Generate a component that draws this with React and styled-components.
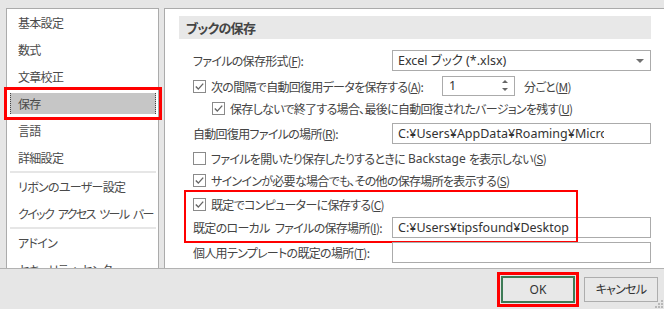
import React from 'react'
import styled, { createGlobalStyle } from 'styled-components'

const GlobalStyle = createGlobalStyle`
  html, body { margin: 0; padding: 0; background: #e6e6e6; }
  body {
    font-family: "Noto Sans CJK JP", sans-serif;
    font-size: 12px;
    color: #444;
    font-feature-settings: "palt";
    letter-spacing: -0.7px;
  }
`

const Window = styled.div`
  width: 664px;
  height: 309px;
  display: flex;
  flex-direction: column;
  overflow: hidden;
`

const Main = styled.div`
  display: flex;
  gap: 5px;
  height: 268px;
  flex: none;
  padding: 8px 0 0 6px;
  box-sizing: border-box;
  overflow: hidden;
`

const Nav = styled.div`
  width: 153px;
  flex: none;
  display: flex;
  flex-direction: column;
  background: #fff;
  border: 1px solid #ababab;
  border-bottom: none;
  box-sizing: border-box;
`

const NavItem = styled.div`
  flex: none;
  height: 21px;
  line-height: 21px;
  margin: 3px 2px 3px 3px;
  padding-left: 7px;
  white-space: nowrap;
  color: #4a4a4a;
  letter-spacing: ${p => (p.$tight ? '-1.6px' : '-0.7px')};
  border-left: 1px dotted ${p => (p.$active ? '#444' : 'transparent')};
  border-right: 1px dotted ${p => (p.$active ? '#444' : 'transparent')};
  background: ${p => (p.$active ? '#c6c6c6' : 'transparent')};
  outline: ${p => (p.$marked ? '3px solid #f00' : 'none')};
  outline-offset: 3px;
`

const NavDivider = styled.div`
  flex: none;
  height: 2px;
  margin: 0 2px 0 3px;
  background: #e6e6e6;
`

const Panel = styled.div`
  flex: 1;
  min-width: 0;
  background: #fff;
  border-left: 1px solid #ababab;
  border-top: 1px solid #ababab;
  padding: 7px 0 0 14px;
`

const SectionTitle = styled.div`
  width: 472px;
  height: 23px;
  line-height: 23px;
  padding-left: 7px;
  box-sizing: border-box;
  background: #e8e8e8;
  font-size: 13px;
  font-weight: bold;
  color: #444;
`

const Form = styled.div`
  width: 472px;
  padding-left: 14px;
  box-sizing: border-box;
`

const Row = styled.div`
  display: flex;
  align-items: center;
  height: ${p => p.$h || 21}px;
  margin-top: ${p => p.$mt || 0}px;
  padding-left: ${p => p.$indent || 0}px;
  white-space: nowrap;
`

const Label = styled.div`
  width: ${p => p.$w || 199}px;
  flex: none;
  display: flex;
  align-items: center;
  white-space: pre;
`

const Field = styled.div`
  position: relative;
  width: 259px;
  height: 21px;
  line-height: 19px;
  border: 1px solid #ababab;
  box-sizing: border-box;
  padding-left: 5px;
  overflow: hidden;
  white-space: nowrap;
  color: #333;
  letter-spacing: normal;
  font-family: "Segoe UI", "Noto Sans", "Noto Sans CJK JP", sans-serif;
  font-size: 12.5px;
`

const Clip = styled.span`
  display: inline-block;
  max-width: ${p => p.$w}px;
  overflow: hidden;
  vertical-align: top;
`

const Arrow = styled.span`
  position: absolute;
  right: 6px;
  top: 8px;
  width: 0;
  height: 0;
  border-left: 4px solid transparent;
  border-right: 4px solid transparent;
  border-top: 4px solid #707070;
`

const Spinner = styled.div`
  position: relative;
  width: 73px;
  height: 20px;
  line-height: 18px;
  border: 1px solid #ababab;
  box-sizing: border-box;
  padding-left: 6px;
  color: #333;
  letter-spacing: normal;
  font-family: "Segoe UI", "Noto Sans", sans-serif;
  font-size: 12.5px;
`

const SpinArrows = styled.div`
  position: absolute;
  right: 6px;
  top: 3px;
  display: flex;
  flex-direction: column;
  gap: 5px;
`

const Tri = styled.span`
  width: 0;
  height: 0;
  border-left: 3px solid transparent;
  border-right: 3px solid transparent;
  ${p => (p.$up ? 'border-bottom: 3px solid #666;' : 'border-top: 3px solid #666;')}
`

const Unit = styled.span`
  margin-left: 9px;
`

const Latin = styled.span`
  font-family: "Segoe UI", "Noto Sans", sans-serif;
  letter-spacing: normal;
`

const Box = styled.span`
  width: 13px;
  height: 13px;
  flex: none;
  margin-right: 5px;
  border: 1px solid #8a8a8a;
  box-sizing: border-box;
  display: inline-flex;
  align-items: center;
  justify-content: center;
  background: #fff;
`

const Group = styled.div`
  position: relative;
  margin-top: 3px;
`

const Highlight = styled.div`
  position: absolute;
  left: -9px;
  top: -4px;
  width: 394px;
  height: 53px;
  border: 2px solid #f00;
  box-sizing: border-box;
  pointer-events: none;
`

const Footer = styled.div`
  position: relative;
  height: 41px;
  flex: none;
  box-sizing: border-box;
  border-top: 1px solid #b2b2b2;
  display: flex;
  justify-content: flex-end;
  align-items: center;
  gap: 9px;
  padding-right: 6px;
`

const Button = styled.button`
  width: 74px;
  height: ${p => (p.$primary ? 27 : 25)}px;
  box-sizing: border-box;
  border: ${p => (p.$primary ? '2px solid #3d7b56' : '1px solid #adadad')};
  background: #e8e8e8;
  color: #333;
  font-family: "Segoe UI", "Noto Sans", "Noto Sans CJK JP", sans-serif;
  font-size: 12px;
  font-feature-settings: "palt";
  letter-spacing: ${p => (p.$primary ? 'normal' : '-0.7px')};
  padding: 0;
  outline: ${p => (p.$marked ? '3px solid #f00' : 'none')};
  outline-offset: 1px;
`

const Grip = styled.svg`
  position: absolute;
  right: 1px;
  bottom: 1px;
`

const Check = ({ checked }) => (
  <Box>
    {checked && (
      <svg width="11" height="11" viewBox="0 0 11 11">
        <path d="M1.8 5.6 L4.3 8.1 L9.2 2.6" fill="none" stroke="#666" strokeWidth="1.4" />
      </svg>
    )}
  </Box>
)

const navTop = ['基本設定', '数式', '文章校正', '保存', '言語', '詳細設定']

const App = () => {
  return (
    <Window>
      <GlobalStyle />
      <Main>
        <Nav>
          {navTop.map(t => (
            <NavItem key={t} $active={t === '保存'} $marked={t === '保存'}>{t}</NavItem>
          ))}
          <NavDivider />
          <NavItem>リボンのユーザー設定</NavItem>
          <NavItem $tight>クイック{'\u2002'}アクセス{'\u2002'}ツール{'\u2002'}バー</NavItem>
          <NavDivider />
          <NavItem>アドイン</NavItem>
          <NavItem>セキュリティ{'\u2002'}センター</NavItem>
        </Nav>
        <Panel>
          <SectionTitle>ブックの保存</SectionTitle>
          <Form>
            <Row $mt={11}>
              <Label>ファイルの保存形式(<u>F</u>):</Label>
              <Field>Excel ブック (*.xlsx)<Arrow /></Field>
            </Row>
            <Row $mt={5} $h={20}>
              <Label $w={249}>
                <Check checked />
                次の間隔で自動回復用データを保存する(<u>A</u>):
              </Label>
              <Spinner>
                1
                <SpinArrows><Tri $up /><Tri /></SpinArrows>
              </Spinner>
              <Unit>分ごと(<u>M</u>)</Unit>
            </Row>
            <Row $mt={2} $indent={19}>
              <Check checked />
              保存しないで終了する場合、最後に自動回復されたバージョンを残す(<u>U</u>)
            </Row>
            <Row $mt={4}>
              <Label>自動回復用ファイルの場所(<u>R</u>):</Label>
              <Field><Clip $w={206}>C:¥Users¥AppData¥Roaming¥Microsoft</Clip></Field>
            </Row>
            <Row $mt={4}>
              <Check />
              ファイルを開いたり保存したりするときに<Latin>&nbsp;Backstage&nbsp;</Latin>を表示しない(<u>S</u>)
            </Row>
            <Row $mt={1}>
              <Check checked />
              サインインが必要な場合でも、その他の保存場所を表示する(<u>S</u>)
            </Row>
            <Group>
              <Row>
                <Check checked />
                既定でコンピューターに保存する(<u>C</u>)
              </Row>
              <Row $mt={2}>
                <Label>既定のローカル{'\u2002'}ファイルの保存場所(<u>I</u>):</Label>
                <Field>C:¥Users¥tipsfound¥Desktop</Field>
              </Row>
              <Highlight />
            </Group>
            <Row $mt={4}>
              <Label>個人用テンプレートの既定の場所(<u>T</u>):</Label>
              <Field />
            </Row>
          </Form>
        </Panel>
      </Main>
      <Footer>
        <Button $primary $marked>OK</Button>
        <Button>キャンセル</Button>
        <Grip width="8" height="8" viewBox="0 0 8 8">
          {[[6, 0], [3, 3], [6, 3], [0, 6], [3, 6], [6, 6]].map(([x, y]) => (
            <rect key={x + '-' + y} x={x} y={y} width="2" height="2" fill="#b8b8b8" />
          ))}
        </Grip>
      </Footer>
    </Window>
  )
}

export default App
